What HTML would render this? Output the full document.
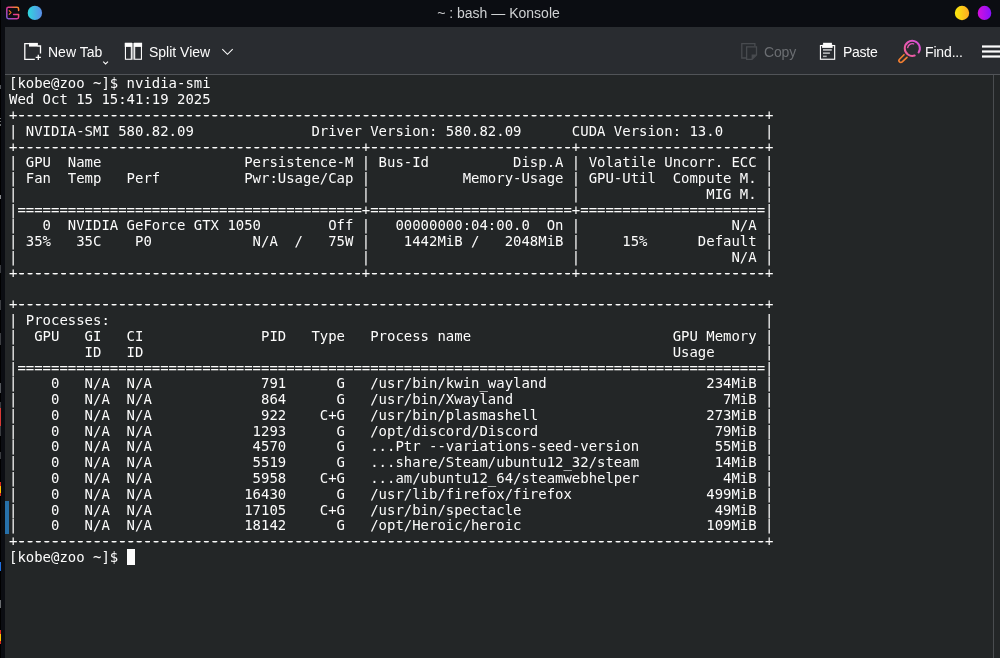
<!DOCTYPE html>
<html><head><meta charset="utf-8"><title>~ : bash — Konsole</title>
<style>
html,body{margin:0;padding:0;background:#000;}
body{width:1000px;height:658px;position:relative;overflow:hidden;font-family:"Liberation Sans","DejaVu Sans",sans-serif;}
#win{position:absolute;left:1px;top:0;width:999px;height:658px;background:#0b0d12;}
#title{position:absolute;left:0;top:0;width:999px;height:27px;color:#cfd1d3;font-size:14px;}
#title .t{will-change:transform;position:absolute;left:-2.2px;width:999px;text-align:center;top:5px;line-height:16px;}
#toolbar{position:absolute;left:4px;top:27px;width:995px;height:47px;background:#292c30;border-bottom:1px solid #515458;box-sizing:content-box;color:#fcfcfc;font-size:14px;}
#term{position:absolute;left:4px;top:75px;width:995px;height:583px;background:#232627;}
#term pre{position:absolute;left:3.7px;top:1px;padding-top:0.45px;will-change:transform;margin:0;font-family:"DejaVu Sans Mono","Liberation Mono",monospace;font-size:13.963px;line-height:15.78px;color:#fcfcfc;white-space:pre;}
#term pre b{font-weight:normal;text-shadow:0.65px 0 0 #fcfcfc,-0.65px 0 0 #fcfcfc;}
#sb{position:absolute;left:988px;top:0;width:1px;height:583px;background:#4a4d50;}
#strip i{position:absolute;left:0;width:1.1px;display:block;}
#cursor{position:absolute;left:122.2px;top:474px;width:7.7px;height:16px;background:#fcfcfc;}
#mark{position:absolute;left:0.2px;top:426px;width:3.6px;height:32.5px;background:#2771aa;}
.tb{will-change:transform;position:absolute;top:1.5px;height:47px;line-height:47px;white-space:nowrap;}
</style></head><body>
<div id="strip">
<i style="top:85.3px;height:4px;background:#55585c"></i>
<i style="top:117.6px;height:1.6px;background:#6a6d70"></i><i style="top:120.8px;height:1.6px;background:#6a6d70"></i><i style="top:124.2px;height:1.6px;background:#6a6d70"></i>
<i style="top:195px;height:4px;background:#8a8c8f"></i>
<i style="top:265px;height:8px;background:#3a3c40"></i>
<i style="top:300px;height:10px;background:#3c3e42"></i>
<i style="top:333px;height:12px;background:#3c3e42"></i>
<i style="top:383px;height:10px;background:#54575b"></i>
<i style="top:402px;height:6px;background:#3a3c40"></i><i style="top:408px;height:18.5px;background:#d93a35"></i>
<i style="top:426px;height:10px;background:#3a3c40"></i>
<i style="top:452px;height:7px;background:#3a3c40"></i>
<i style="top:482.3px;height:13.7px;background:#d8281e"></i>
<i style="top:485.5px;height:7.3px;background:#ffc400"></i>
<i style="top:562.2px;height:8.5px;background:#1f6fe0"></i>
<i style="top:600px;height:8px;background:#6a6d70"></i>
<i style="top:630px;height:14px;background:#d8281e"></i>
<i style="top:633.5px;height:7.5px;background:#ffc400"></i>
</div>
<div id="win">
<div id="title"><div class="t">~ : bash — Konsole</div></div>
<div id="toolbar">
<span class="tb" style="left:43.2px">New Tab</span>
<span class="tb" style="left:143.6px">Split View</span>
<span class="tb" style="left:759px;color:#6b6e72;letter-spacing:-0.15px">Copy</span>
<span class="tb" style="left:838px;letter-spacing:-0.25px">Paste</span>
<span class="tb" style="left:920px;letter-spacing:-0.15px">Find...</span>
</div>
<div id="term"><pre>[kobe@zoo ~]$ nvidia-smi
Wed Oct 15 15:41:19 2025       
+<b>-----------------------------------------------------------------------------------------</b>+
| NVIDIA-SMI 580.82.09              Driver Version: 580.82.09      CUDA Version: 13.0     |
+<b>-----------------------------------------</b>+<b>------------------------</b>+<b>----------------------</b>+
| GPU  Name                 Persistence-M | Bus-Id          Disp.A | Volatile Uncorr. ECC |
| Fan  Temp   Perf          Pwr:Usage/Cap |           Memory-Usage | GPU-Util  Compute M. |
|                                         |                        |               MIG M. |
|=========================================+========================+======================|
|   0  NVIDIA GeForce GTX 1050        Off |   00000000:04:00.0  On |                  N/A |
| 35%   35C    P0            N/A  /   75W |    1442MiB /   2048MiB |     15%      Default |
|                                         |                        |                  N/A |
+<b>-----------------------------------------</b>+<b>------------------------</b>+<b>----------------------</b>+

+<b>-----------------------------------------------------------------------------------------</b>+
| Processes:                                                                              |
|  GPU   GI   CI              PID   Type   Process name                        GPU Memory |
|        ID   ID                                                               Usage      |
|=========================================================================================|
|    0   N/A  N/A             791      G   /usr/bin/kwin_wayland                   234MiB |
|    0   N/A  N/A             864      G   /usr/bin/Xwayland                         7MiB |
|    0   N/A  N/A             922    C+G   /usr/bin/plasmashell                    273MiB |
|    0   N/A  N/A            1293      G   /opt/discord/Discord                     79MiB |
|    0   N/A  N/A            4570      G   ...Ptr --variations-seed-version         55MiB |
|    0   N/A  N/A            5519      G   ...share/Steam/ubuntu12_32/steam         14MiB |
|    0   N/A  N/A            5958    C+G   ...am/ubuntu12_64/steamwebhelper          4MiB |
|    0   N/A  N/A           16430      G   /usr/lib/firefox/firefox                499MiB |
|    0   N/A  N/A           17105    C+G   /usr/bin/spectacle                       49MiB |
|    0   N/A  N/A           18142      G   /opt/Heroic/heroic                      109MiB |
+<b>-----------------------------------------------------------------------------------------</b>+
[kobe@zoo ~]$ </pre>
<div id="sb"></div>
<div id="mark"></div>
<div id="cursor"></div>
</div>
</div>
<svg id="icons" style="position:absolute;left:0;top:0" width="1000" height="75" viewBox="0 0 1000 75">
<defs>
<linearGradient id="gk" gradientUnits="userSpaceOnUse" x1="6" y1="19.5" x2="19.5" y2="6.5"><stop offset="0" stop-color="#6f63dc"/><stop offset="0.5" stop-color="#e0349a"/><stop offset="1" stop-color="#ffa00a"/></linearGradient>
<linearGradient id="gb" x1="0" y1="0" x2="1" y2="0"><stop offset="0" stop-color="#2fd8de"/><stop offset="1" stop-color="#5b8de8"/></linearGradient>
<linearGradient id="gy" x1="0" y1="0" x2="1" y2="0"><stop offset="0" stop-color="#f8e80c"/><stop offset="0.35" stop-color="#fbd414"/><stop offset="1" stop-color="#ffa923"/></linearGradient>
<linearGradient id="gp" x1="0" y1="0" x2="1" y2="0"><stop offset="0" stop-color="#d60fdc"/><stop offset="1" stop-color="#8712ff"/></linearGradient>
<linearGradient id="gf" gradientUnits="userSpaceOnUse" x1="904" y1="56" x2="921" y2="41"><stop offset="0" stop-color="#f4628a"/><stop offset="1" stop-color="#d64de2"/></linearGradient>
</defs>
<!-- app icon -->
<path d="M18.6 10.4V8.9a1.6 1.6 0 0 0-1.6-1.6H8.4a1.6 1.6 0 0 0-1.6 1.6v8.2a1.6 1.6 0 0 0 1.6 1.6h8.6a1.6 1.6 0 0 0 1.6-1.6V14.6H13.6" fill="none" stroke="url(#gk)" stroke-width="1.5" stroke-linecap="round" stroke-linejoin="round"/>
<path d="M9.2 10.6L11 12.5L9.2 14.4" fill="none" stroke="#ee6f1c" stroke-width="1.1" stroke-linecap="round" stroke-linejoin="round"/>
<circle cx="34.9" cy="12.9" r="7.2" fill="url(#gb)"/>
<circle cx="962" cy="13" r="7.2" fill="url(#gy)"/>
<ellipse cx="984.5" cy="12.9" rx="6.8" ry="7.1" fill="url(#gp)"/>
<!-- New Tab -->
<g fill="none" stroke="#fcfcfc" stroke-width="1.3">
<path d="M29.5 43.6H24.8V59.3H34.8"/>
<path d="M37.5 46H40.5V53.6"/>
<path d="M38.3 54.8V60.1M35.7 57.4H40.9"/>
</g>
<rect x="29" y="42.9" width="8.9" height="3.7" fill="#fcfcfc"/>
<path d="M103.2 61.6L105.6 64L108 61.6" fill="none" stroke="#fcfcfc" stroke-width="1.1"/>
<!-- Split View -->
<rect x="131.6" y="43" width="2.6" height="16.8" fill="#9c9ea0"/>
<rect x="125.45" y="43.45" width="5.9" height="15.8" fill="none" stroke="#fcfcfc" stroke-width="1.1"/>
<rect x="134.65" y="43.45" width="6.8" height="15.8" fill="none" stroke="#fcfcfc" stroke-width="1.1"/>
<rect x="124.8" y="42.8" width="7.2" height="4.1" fill="#fcfcfc"/>
<rect x="134" y="42.8" width="8.1" height="4.1" fill="#fcfcfc"/>
<path d="M222.3 49.2L227.5 54.3L232.7 49.2" fill="none" stroke="#fcfcfc" stroke-width="1.1"/>
<!-- Copy -->
<g fill="none" stroke="#484b4f" stroke-width="1.3">
<path d="M746 58H741.8V43.7H754.9V46.3"/>
<path d="M746.6 46.9H756.5V55L752 59.3H746.6Z"/>
</g>
<path d="M751.6 59.8V54.6H757Z" fill="#484b4f"/>
<!-- Paste -->
<rect x="820.45" y="45.55" width="14.2" height="13.7" fill="none" stroke="#fcfcfc" stroke-width="1.15"/>
<rect x="823.1" y="42.8" width="8.8" height="3" fill="#fcfcfc"/>
<rect x="822.1" y="44.8" width="10.5" height="3.1" fill="#fcfcfc"/>
<rect x="823" y="49" width="8.8" height="1.8" fill="#aeb0b2"/>
<rect x="823" y="52.3" width="6.9" height="1.7" fill="#aeb0b2"/>
<rect x="823" y="55.6" width="3.7" height="1.5" fill="#aeb0b2"/>
<!-- Find -->
<path d="M918.6 52.5A7.55 7.55 0 1 0 914.7 55.5" fill="none" stroke="url(#gf)" stroke-width="2" stroke-linecap="round"/>
<path d="M907.7 47.6A4.7 4.7 0 0 1 913.6 43.8" fill="none" stroke="url(#gf)" stroke-width="1.4" stroke-linecap="round"/>
<path d="M904 54.7L899.5 59.2a1.9 1.9 0 0 0 2.7 2.7L907 57.3" fill="none" stroke="#f37f31" stroke-width="1.6" stroke-linecap="round" stroke-linejoin="round"/>
<!-- hamburger -->
<rect x="982" y="45.4" width="18" height="2.2" fill="#fcfcfc"/>
<rect x="982" y="50.4" width="18" height="2.2" fill="#fcfcfc"/>
<rect x="982" y="55.4" width="18" height="2.2" fill="#fcfcfc"/>
</svg>
</body></html>
